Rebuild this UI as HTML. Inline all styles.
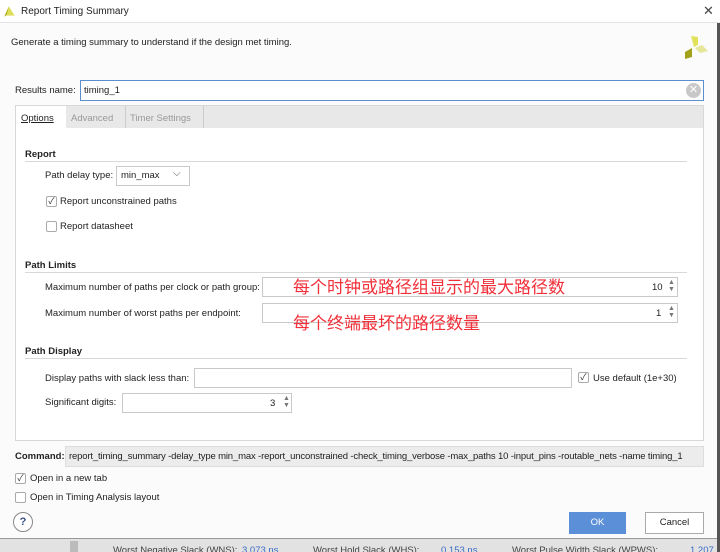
<!DOCTYPE html>
<html><head><meta charset="utf-8"><style>
*{margin:0;padding:0;box-sizing:border-box}
body{width:720px;height:552px;overflow:hidden;background:#f9f9f9;font-family:"Liberation Sans","Noto Sans CJK SC",sans-serif;font-size:9.5px;color:#222;position:relative}
.a{position:absolute;white-space:nowrap}
.box{position:absolute;background:#fff;border:1px solid #c9c9c9}
.cb{position:absolute;width:11px;height:11px;border:1px solid #aaa;border-radius:2px;background:#fff;font-size:9px;line-height:9px;text-align:center;color:#333}
.h{font-weight:bold;font-size:9.5px}
.line{position:absolute;height:1px;background:#d8d8d8}
.cn{position:absolute;color:#f0303a;font-size:17px;white-space:nowrap;font-family:"Noto Sans CJK SC",sans-serif;line-height:18px}
.sp{position:absolute;font-size:7px;color:#777;line-height:7px}
</style></head><body>
<div class="a" style="left:0;top:0;width:720px;height:23px;background:#fff;border-bottom:1px solid #e4e4e4"></div>
<svg class="a" style="left:3px;top:4px" width="14" height="14" viewBox="0 0 12 12"><polygon points="1,11 5,2 6,7" fill="#a8a814"/><polygon points="5,2 10,10 3,10" fill="#dede5a"/></svg>
<div class="a" style="left:21px;top:6px;font-size:10px">Report Timing Summary</div>
<div class="a" style="left:703px;top:3px;font-size:13px;color:#444">✕</div>
<div class="a" style="left:717px;top:23px;width:3px;height:529px;background:#555"></div>
<div class="a" style="left:0;top:23px;width:717px;height:515px;background:#fbfbfb"></div>
<div class="a" style="left:11px;top:37px;font-size:9.5px">Generate a timing summary to understand if the design met timing.</div>
<svg class="a" style="left:682px;top:33px" width="26" height="26" viewBox="0 0 26 26"><polygon points="9,3 16,4 16,12 12,14" fill="#e2e25a"/><polygon points="13,15 20,12 26,18 18,20" fill="#e6e69a"/><polygon points="3,19 10,15 10,24 3,26" fill="#a2a21a"/></svg>
<div class="a" style="left:15px;top:85px">Results name:</div>
<div class="box" style="left:80px;top:80px;width:624px;height:21px;border:1px solid #5a8ed0"></div>
<div class="a" style="left:84px;top:85px">timing_1</div>
<div class="a" style="left:686px;top:83px;width:15px;height:15px;border-radius:50%;background:#c8c8c8;color:#fff;font-size:11px;line-height:15px;text-align:center">✕</div>
<div class="a" style="left:15px;top:105px;width:689px;height:336px;background:#fff;border:1px solid #d8d8d8"></div>
<div class="a" style="left:16px;top:106px;width:687px;height:22px;background:#e8e8e8"></div>
<div class="a" style="left:16px;top:106px;width:50px;height:23px;background:#fff"></div>
<div class="a" style="left:21px;top:113px;text-decoration:underline;text-decoration-thickness:1px">Options</div>
<div class="a" style="left:71px;top:113px;color:#999">Advanced</div>
<div class="a" style="left:125px;top:106px;width:1px;height:22px;background:#ccc"></div>
<div class="a" style="left:130px;top:113px;color:#999">Timer Settings</div>
<div class="a" style="left:203px;top:106px;width:1px;height:22px;background:#ccc"></div>
<div class="a h" style="left:25px;top:149px">Report</div><div class="line" style="left:25px;top:161px;width:662px"></div>
<div class="a" style="left:45px;top:170px">Path delay type:</div>
<div class="box" style="left:116px;top:166px;width:74px;height:20px"></div>
<div class="a" style="left:121px;top:170px">min_max</div>
<div class="a" style="left:173px;top:168px;font-size:10px;color:#555">⌵</div>
<div class="cb" style="left:46px;top:196px">✓</div><div class="a" style="left:60px;top:196px">Report unconstrained paths</div>
<div class="cb" style="left:46px;top:221px"></div><div class="a" style="left:60px;top:221px">Report datasheet</div>
<div class="a h" style="left:25px;top:260px">Path Limits</div><div class="line" style="left:25px;top:272px;width:662px"></div>
<div class="a" style="left:45px;top:282px">Maximum number of paths per clock or path group:</div>
<div class="box" style="left:262px;top:277px;width:416px;height:20px"></div>
<div class="a" style="left:652px;top:282px">10</div><div class="sp" style="left:668px;top:279px">▲<br>▼</div>
<div class="a" style="left:45px;top:308px">Maximum number of worst paths per endpoint:</div>
<div class="box" style="left:262px;top:303px;width:416px;height:20px"></div>
<div class="a" style="left:656px;top:308px">1</div><div class="sp" style="left:668px;top:305px">▲<br>▼</div>
<div class="cn" style="left:293px;top:277px">每个时钟或路径组显示的最大路径数</div>
<div class="cn" style="left:293px;top:313px">每个终端最坏的路径数量</div>
<div class="a h" style="left:25px;top:346px">Path Display</div><div class="line" style="left:25px;top:358px;width:662px"></div>
<div class="a" style="left:45px;top:373px">Display paths with slack less than:</div>
<div class="box" style="left:194px;top:368px;width:378px;height:20px"></div>
<div class="cb" style="left:578px;top:372px">✓</div><div class="a" style="left:593px;top:373px">Use default (1e+30)</div>
<div class="a" style="left:45px;top:397px">Significant digits:</div>
<div class="box" style="left:122px;top:393px;width:170px;height:20px"></div>
<div class="a" style="left:270px;top:398px">3</div><div class="sp" style="left:283px;top:395px">▲<br>▼</div>
<div class="a h" style="left:15px;top:451px">Command:</div>
<div class="a" style="left:65px;top:446px;width:639px;height:21px;background:#ececec;border:1px solid #ddd"></div>
<div class="a" style="left:69px;top:451px;letter-spacing:-0.15px">report_timing_summary -delay_type min_max -report_unconstrained -check_timing_verbose -max_paths 10 -input_pins -routable_nets -name timing_1</div>
<div class="cb" style="left:15px;top:473px">✓</div><div class="a" style="left:30px;top:473px">Open in a new tab</div>
<div class="cb" style="left:15px;top:492px"></div><div class="a" style="left:30px;top:492px">Open in Timing Analysis layout</div>
<div class="a" style="left:13px;top:512px;width:20px;height:20px;border:1px solid #888;border-radius:50%;text-align:center;line-height:18px;font-weight:bold;color:#3a4f8a;font-size:11px;background:#fff">?</div>
<div class="a" style="left:569px;top:512px;width:57px;height:22px;background:#5b8fd8;color:#fff;text-align:center;line-height:22px">OK</div>
<div class="a" style="left:645px;top:512px;width:59px;height:22px;background:#fff;border:1px solid #aaa;text-align:center;line-height:20px">Cancel</div>
<div class="a" style="left:0;top:538px;width:717px;height:14px;background:#e2e2e2;border-top:1px solid #999;overflow:hidden">
<div class="a" style="left:70px;top:2px;width:8px;height:12px;background:#bbb"></div>
<div class="a" style="left:113px;top:6px;color:#444">Worst Negative Slack (WNS):</div>
<div class="a" style="left:242px;top:6px;color:#3a6bc4">3.073 ns</div>
<div class="a" style="left:313px;top:6px;color:#444">Worst Hold Slack (WHS):</div>
<div class="a" style="left:441px;top:6px;color:#3a6bc4">0.153 ns</div>
<div class="a" style="left:512px;top:6px;color:#444">Worst Pulse Width Slack (WPWS):</div>
<div class="a" style="left:690px;top:6px;color:#3a6bc4">1.207</div>
</div>
</body></html>
